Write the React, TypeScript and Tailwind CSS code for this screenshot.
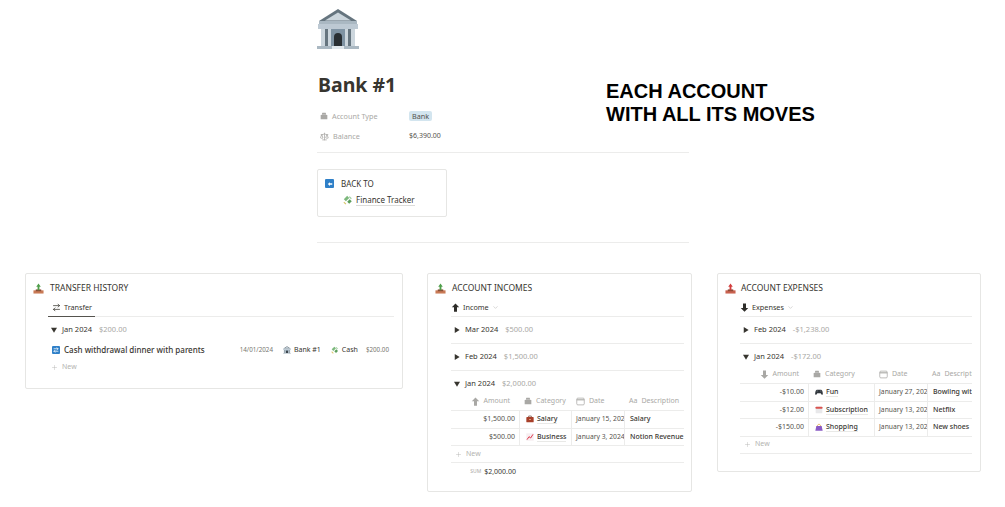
import { ArrowRightLeft, ChevronDown, Plus, Scale } from "lucide-react";
import type { ReactNode } from "react";

const font = "font-['Noto_Sans',sans-serif]";

function BankIcon({ className }: { className: string }) {
  return (
    <svg viewBox="0 0 42 42" className={className} aria-hidden="true">
      <path d="M21 1 2 13h38z" fill="#66757f" />
      <path d="M21 4.5 8 12.5h26z" fill="#ccd6dd" />
      <path d="M2 13h38v4H2z" fill="#aab8c2" />
      <path d="M1 16h40v5H1z" fill="#bdc9d3" />
      <path d="M4 21h34v17H4z" fill="#ccd6dd" />
      <path d="M8 21h3v17H8zM31 21h3v17h-3z" fill="#66757f" />
      <path d="M14 21h14v17H14z" fill="#7f93a3" />
      <path d="M17 38V29a4 4 0 0 1 8 0v9z" fill="#292f33" />
      <path d="M0 38h15v3H0zM27 38h15v3H27z" fill="#aab8c2" />
      <path d="M15 38h12v3H15z" fill="#e1e8ed" />
    </svg>
  );
}

function MoneyIcon({ className }: { className: string }) {
  return (
    <svg viewBox="0 0 12 12" className={className} aria-hidden="true">
      <path d="M1 5 5 1l2.5 2.5-4 4z" fill="#7cb87c" />
      <path d="M5 8l3-3 2.5 2.5-3 3z" fill="#5c9e5c" />
      <path d="M8 1.5 10.5 4 9.5 5 7 2.5z" fill="#9ccc9c" />
      <path d="M1.5 8 4 10.5 3 11.5.5 9z" fill="#d8c66a" />
    </svg>
  );
}

function TrayIcon({ red }: { red?: boolean }) {
  return (
    <svg viewBox="0 0 12 12" className="w-[11px] h-[11px]" aria-hidden="true">
      <path d="M0.5 8h11v3.5H.5z" fill={red ? "#c9614f" : "#c97a55"} />
      <path d="M3 7h6v2H3z" fill="#8a4b36" />
      <path d="M6 .5 8.5 4H7v4H5V4H3.5z" fill={red ? "#d33d3d" : "#4f9e4a"} />
    </svg>
  );
}

function BigArrow({ down, className }: { down?: boolean; className: string }) {
  return (
    <svg viewBox="0 0 12 12" className={className} aria-hidden="true">
      <path
        d={down ? "M6 11.5 1 6.5h3V.5h4v6h3z" : "M6 .5l5 5H8v6H4v-6H1z"}
        fill="currentColor"
      />
    </svg>
  );
}

function StackIcon({ className }: { className: string }) {
  return (
    <svg viewBox="0 0 12 12" className={className} aria-hidden="true">
      <path d="M3.5 1h5l1 3h-7zM1 4.5h10v6.5H1z" fill="currentColor" />
    </svg>
  );
}

function CalendarIcon() {
  return (
    <svg viewBox="0 0 12 12" className="w-[9px] h-[9px] text-[#a9a8a5]" aria-hidden="true">
      <rect x="1" y="1.5" width="10" height="9" rx="1.5" fill="none" stroke="currentColor" />
      <path d="M1 3h10v1.5H1z" fill="currentColor" />
    </svg>
  );
}

function Triangle({ open }: { open?: boolean }) {
  return (
    <svg viewBox="0 0 8 8" className="w-[6px] h-[6px] text-[#37352f]" aria-hidden="true">
      <path d={open ? "M0 1h8L4 7.5z" : "M1 0v8l6.5-4z"} fill="currentColor" />
    </svg>
  );
}

function Briefcase() {
  return (
    <svg viewBox="0 0 12 12" className="w-[8px] h-[8px] shrink-0" aria-hidden="true">
      <path d="M4 3V1.5h4V3" fill="none" stroke="#6b3a2a" />
      <rect x="0.5" y="3" width="11" height="8" rx="1" fill="#a8402a" />
      <path d="M5 6h2v1.5H5z" fill="#f2c9a0" />
    </svg>
  );
}

function ChartUp() {
  return (
    <svg viewBox="0 0 12 12" className="w-[8px] h-[8px] shrink-0" aria-hidden="true">
      <rect x="0.5" y="0.5" width="11" height="11" fill="#f7eef0" />
      <path d="M1.5 10 4.5 5.5l2.5 2L10.5 2" fill="none" stroke="#dd2e44" strokeWidth="1.4" />
    </svg>
  );
}

function Gamepad() {
  return (
    <svg viewBox="0 0 12 12" className="w-[8px] h-[8px] shrink-0" aria-hidden="true">
      <path d="M3 2.5h6c1.5 0 2.5 1.5 2.8 6.5.1 1.5-1.6 1.6-2.3.3L8.5 8h-5l-1 1.3C1.8 10.6.1 10.5.2 9 .5 4 1.5 2.5 3 2.5z" fill="#31373d" />
      <path d="M8 4h1.5v1H8zM2.500 4H4v1H2.500z" fill="#ccd6dd" />
    </svg>
  );
}

function CalendarEmoji() {
  return (
    <svg viewBox="0 0 12 12" className="w-[8px] h-[8px] shrink-0" aria-hidden="true">
      <rect x="1" y="1" width="10" height="10" rx="1" fill="#e8e8ea" />
      <path d="M1 2a1 1 0 0 1 1-1h8a1 1 0 0 1 1 1v2H1z" fill="#d9534f" />
    </svg>
  );
}

function PurpleBag() {
  return (
    <svg viewBox="0 0 12 12" className="w-[8px] h-[8px] shrink-0" aria-hidden="true">
      <path d="M3.5 5C3.5 1 8.5 1 8.5 5" fill="none" stroke="#e0a53a" strokeWidth="1.2" />
      <path d="M2 4.500h8l1.500 7H.5z" fill="#8a5bc4" />
    </svg>
  );
}

function Group({ label, total, open }: { label: string; total: string; open?: boolean }) {
  return (
    <div className="flex items-center gap-[4px] text-[7.5px] leading-[11px] pl-[3px]">
      <Triangle open={open} />
      <span className="text-[#37352f] ml-[1px]">{label}</span>
      <span className="text-[#a9a8a5] ml-[3px]">{total}</span>
    </div>
  );
}

function Card({ className, gap, icon, title, children }: { className: string; gap: string; icon: ReactNode; title: string; children: ReactNode }) {
  return (
    <section className={`border border-[#e6e6e4] rounded-[2px] shrink-0 ${className}`}>
      <div className={`flex items-center ${gap} pl-[7px] pt-[5px] h-[24px]`}>
        {icon}
        <h2 className="text-[8.5px] text-[#37352f] leading-none">{title}</h2>
      </div>
      {children}
    </section>
  );
}

function ViewTab({ down, label }: { down?: boolean; label: string }) {
  return (
    <div className="flex items-center gap-[3px] h-[18px] text-[7.25px] text-[#37352f]">
      <BigArrow down={down} className="w-[9px] h-[9px] text-[#2f2e2a]" />
      <span>{label}</span>
      <ChevronDown className="w-[7px] h-[7px] text-[#a9a8a5]" strokeWidth={1.5} />
    </div>
  );
}

function HeaderCell({ w, icon, label, right }: { w: string; icon: ReactNode; label: string; right?: boolean }) {
  return (
    <div className={`flex items-center gap-[4px] text-[7px] text-[#a9a8a5] whitespace-nowrap overflow-hidden ${w} ${right ? "justify-end pr-[10px]" : "pl-[4px]"}`}>
      {icon}
      <span>{label}</span>
    </div>
  );
}

type Row = { amount: string; icon: ReactNode; category: string; date: string; description: string };

function MovesTable({ rows, dateW, catW, amountW, amountIcon }: { rows: Row[]; dateW: string; catW: string; amountW: string; amountIcon: ReactNode }) {
  return (
    <div className="w-full overflow-hidden">
      <div className="flex items-center h-[18px]">
        <HeaderCell w={amountW} right icon={amountIcon} label="Amount" />
        <HeaderCell w={catW} icon={<StackIcon className="w-[8px] h-[8px] text-[#a9a8a5]" />} label="Category" />
        <HeaderCell w={dateW} icon={<CalendarIcon />} label="Date" />
        <HeaderCell w="flex-1" icon={<span>Aa</span>} label="Description" />
      </div>
      {rows.map((row) => (
        <div key={row.category} className="flex items-center h-[17.5px] border-t border-[#ececeb] text-[7px] text-[#37352f]">
          <div className={`${amountW} text-right text-[#55534e] pr-[4px] h-full flex items-center justify-end border-r border-[#ececeb]`}>{row.amount}</div>
          <div className={`${catW} pl-[6px] h-full flex items-center gap-[3px] border-r border-[#ececeb] whitespace-nowrap`}>
            {row.icon}
            <span className="border-b border-[#e9e9e7] leading-[9px] font-medium">{row.category}</span>
          </div>
          <div className={`${dateW} pl-[4px] text-[6.75px] text-[#55534e] h-full flex items-center border-r border-[#ececeb] whitespace-nowrap overflow-hidden`}>{row.date}</div>
          <div className="flex-1 pl-[5px] whitespace-nowrap overflow-hidden font-medium">{row.description}</div>
        </div>
      ))}
      <div className="flex items-center gap-[4px] h-[17px] pl-[4px] border-t border-[#ececeb] text-[7px] text-[#b4b3b0]">
        <Plus className="w-[7px] h-[7px]" strokeWidth={1.5} />
        New
      </div>
    </div>
  );
}

const incomeRows: Row[] = [
  { amount: "$1,500.00", icon: <Briefcase />, category: "Salary", date: "January 15, 2024", description: "Salary" },
  { amount: "$500.00", icon: <ChartUp />, category: "Business", date: "January 3, 2024", description: "Notion Revenue" },
];

const expenseRows: Row[] = [
  { amount: "-$10.00", icon: <Gamepad />, category: "Fun", date: "January 27, 2024", description: "Bowling with friends" },
  { amount: "-$12.00", icon: <CalendarEmoji />, category: "Subscription", date: "January 13, 2024", description: "Netflix" },
  { amount: "-$150.00", icon: <PurpleBag />, category: "Shopping", date: "January 13, 2024", description: "New shoes" },
];

export default function App() {
  return (
    <div className={`relative w-[1005px] h-[507px] overflow-hidden bg-white ${font}`}>
      <div className="ml-[317px] w-[372px] pt-[8px]">
        <BankIcon className="w-[42px] h-[42px]" />
        <h1 className="mt-[20px] pl-px text-[19.5px] leading-[30px] font-bold text-[#37352f]">Bank #1</h1>
        <div className="mt-[6px] flex items-center h-[20px] text-[7.25px]">
          <div className="w-[92px] pl-[3px] flex items-center gap-[4px] text-[#a9a8a5]">
            <StackIcon className="w-[8px] h-[8px]" />
            Account Type
          </div>
          <span className="bg-[#d3e5ef] text-[#55534e] rounded-[2px] px-[3px] leading-[10px]">Bank</span>
        </div>
        <div className="flex items-center h-[20px] text-[7.25px]">
          <div className="w-[92px] pl-[3px] flex items-center gap-[4px] text-[#a9a8a5]">
            <Scale className="w-[9px] h-[9px]" strokeWidth={2} />
            Balance
          </div>
          <span className="text-[7px] text-[#55534e]">$6,390.00</span>
        </div>
        <div className="mt-[6px] border-t border-[#ececeb]" />
        <div className="mt-[16px] w-[130px] h-[48px] border border-[#e6e6e4] rounded-[2px] pl-[7px] pt-[6px]">
          <div className="flex items-center gap-[7px] text-[8px] text-[#37352f] leading-[15px]">
            <span className="w-[9px] h-[9px] rounded-[1px] bg-[#2f80c8] flex items-center justify-center">
              <svg viewBox="0 0 8 8" className="w-[6px] h-[6px]" aria-hidden="true">
                <path d="M1 4l3-2.5V3h3v2H4v1.500z" fill="white" />
              </svg>
            </span>
            BACK TO
          </div>
          <div className="flex items-center gap-[3px] ml-[18px] mt-[3px] text-[8px] text-[#37352f] leading-[15px]">
            <MoneyIcon className="w-[10px] h-[10px]" />
            <span className="border-b border-[#dcdcda] leading-[11px]">Finance Tracker</span>
          </div>
        </div>
        <div className="mt-[25px] border-t border-[#ececeb]" />
      </div>

      <p className="absolute left-[606px] top-[80px] font-['Liberation_Sans',sans-serif] font-bold text-[20px] leading-[23px] text-black">
        EACH ACCOUNT
        <br />
        WITH ALL ITS MOVES
      </p>

      <div className="mt-[30px] flex items-start pl-[25px]">
        <Card className="w-[378px] h-[116px]" gap="gap-[6px]" icon={<TrayIcon />} title="TRANSFER HISTORY">
          <div className="ml-[22px] mr-[8px]">
            <div className="border-b border-[#ececeb]">
              <div className="w-[47px] flex items-center gap-[3px] h-[19px] pl-[4px] border-b border-[#55534e] -mb-px text-[7.25px] text-[#37352f]">
                <ArrowRightLeft className="w-[9px] h-[9px]" strokeWidth={2} />
                Transfer
              </div>
            </div>
            <div className="mt-[7px]">
              <Group label="Jan 2024" total="$200.00" open />
            </div>
            <div className="mt-[5px] h-[20px] pl-[4px] flex items-center text-[7px] text-[#37352f]">
              <span className="w-[8px] h-[8px] rounded-[1px] bg-[#2f80c8] shrink-0 flex items-center justify-center">
                <ArrowRightLeft className="w-[6px] h-[6px] text-white" strokeWidth={3} />
              </span>
              <span className="ml-[4px] text-[8px] font-medium">Cash withdrawal dinner with parents</span>
              <span className="ml-auto text-[6.25px] text-[#77756f]">14/01/2024</span>
              <BankIcon className="ml-[10px] w-[8px] h-[8px]" />
              <span className="ml-[3px]">Bank #1</span>
              <MoneyIcon className="ml-[10px] w-[8px] h-[8px]" />
              <span className="ml-[3px]">Cash</span>
              <span className="ml-[8px] mr-[5px] text-[6.25px] text-[#77756f]">$200.00</span>
            </div>
            <div className="flex items-center gap-[4px] h-[14px] pl-[3px] text-[7px] text-[#b4b3b0]">
              <Plus className="w-[7px] h-[7px]" strokeWidth={1.5} />
              New
            </div>
          </div>
        </Card>

        <Card className="ml-[24px] w-[265px] h-[219px]" gap="gap-[6px]" icon={<TrayIcon />} title="ACCOUNT INCOMES">
          <div className="ml-[23px] mr-[7px]">
            <ViewTab label="Income" />
            <div className="h-[27px] pt-[7px] border-t border-[#ececeb]"><Group label="Mar 2024" total="$500.00" /></div>
            <div className="h-[27px] pt-[7px] border-t border-[#ececeb]"><Group label="Feb 2024" total="$1,500.00" /></div>
            <div className="h-[22px] pt-[7px] border-t border-[#ececeb]"><Group label="Jan 2024" total="$2,000.00" open /></div>
            <MovesTable
              rows={incomeRows}
              amountW="w-[69px]"
              catW="w-[52px]"
              dateW="w-[53px]"
              amountIcon={<BigArrow className="w-[9px] h-[9px] text-[#a9a8a5]" />}
            />
            <div className="border-t border-[#ececeb]">
              <div className="h-[18px] w-[65px] flex items-center justify-end text-[7px] text-[#37352f]">
                <span className="text-[5px] text-[#a9a8a5] mr-[3px]">SUM</span>
                $2,000.00
              </div>
            </div>
          </div>
        </Card>

        <Card className="ml-[25px] w-[264px] h-[199px]" gap="gap-[5px]" icon={<TrayIcon red />} title="ACCOUNT EXPENSES">
          <div className="ml-[22px] mr-[8px]">
            <ViewTab down label="Expenses" />
            <div className="h-[27px] pt-[7px] border-t border-[#ececeb]"><Group label="Feb 2024" total="-$1,238.00" /></div>
            <div className="h-[22px] pt-[7px] border-t border-[#ececeb]"><Group label="Jan 2024" total="-$172.00" open /></div>
            <MovesTable
              rows={expenseRows}
              amountW="w-[69px]"
              catW="w-[66px]"
              dateW="w-[53px]"
              amountIcon={<BigArrow down className="w-[9px] h-[9px] text-[#a9a8a5]" />}
            />
            <div className="border-t border-[#ececeb]" />
          </div>
        </Card>
      </div>
    </div>
  );
}
